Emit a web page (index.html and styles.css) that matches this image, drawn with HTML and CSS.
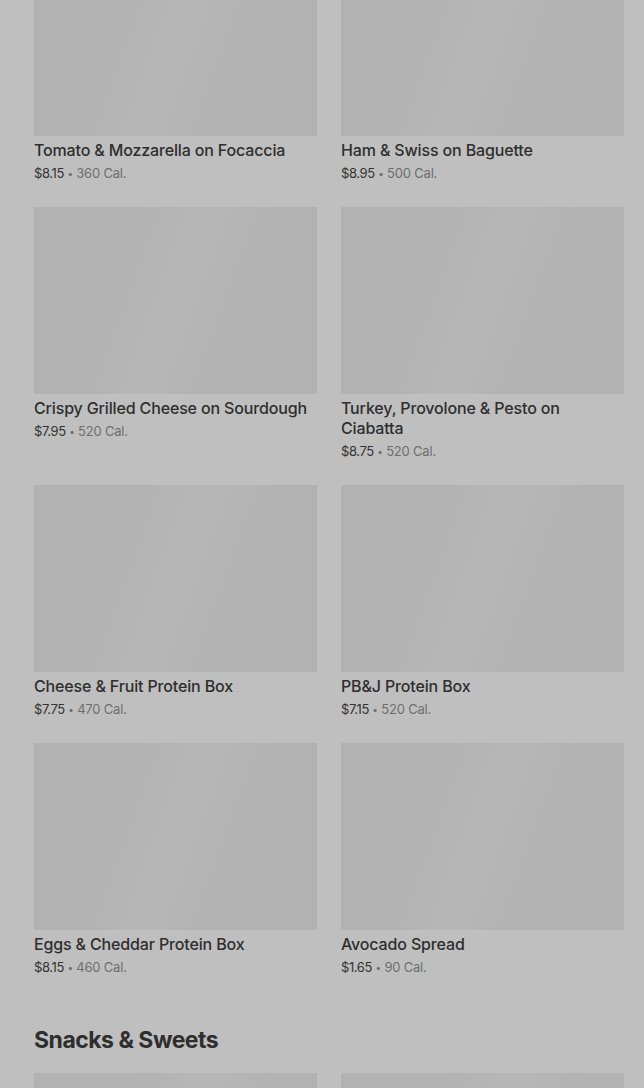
FILE: index.html
```html
<!DOCTYPE html>
<html lang="en">
<head>
<meta charset="utf-8">
<link rel="stylesheet" href="styles.css">
</head>
<body>
<main class="menu">
  <section class="grid first">
    <article class="item"><div class="thumb"></div><h3 class="name">Tomato &amp; Mozzarella on Focaccia</h3><p class="meta"><span class="price">$8.15</span> <span class="dot">•</span> 360 Cal.</p></article>
    <article class="item"><div class="thumb"></div><h3 class="name">Ham &amp; Swiss on Baguette</h3><p class="meta"><span class="price">$8.95</span> <span class="dot">•</span> 500 Cal.</p></article>
    <article class="item"><div class="thumb"></div><h3 class="name">Crispy Grilled Cheese on Sourdough</h3><p class="meta"><span class="price">$7.95</span> <span class="dot">•</span> 520 Cal.</p></article>
    <article class="item"><div class="thumb"></div><h3 class="name">Turkey, Provolone &amp; Pesto on Ciabatta</h3><p class="meta"><span class="price">$8.75</span> <span class="dot">•</span> 520 Cal.</p></article>
    <article class="item"><div class="thumb"></div><h3 class="name">Cheese &amp; Fruit Protein Box</h3><p class="meta"><span class="price">$7.75</span> <span class="dot">•</span> 470 Cal.</p></article>
    <article class="item"><div class="thumb"></div><h3 class="name">PB&amp;J Protein Box</h3><p class="meta"><span class="price">$7.15</span> <span class="dot">•</span> 520 Cal.</p></article>
    <article class="item"><div class="thumb"></div><h3 class="name">Eggs &amp; Cheddar Protein Box</h3><p class="meta"><span class="price">$8.15</span> <span class="dot">•</span> 460 Cal.</p></article>
    <article class="item"><div class="thumb"></div><h3 class="name">Avocado Spread</h3><p class="meta"><span class="price">$1.65</span> <span class="dot">•</span> 90 Cal.</p></article>
  </section>
  <h2 class="section-title">Snacks &amp; Sweets</h2>
  <section class="grid">
    <article class="item"><div class="thumb"></div></article>
    <article class="item"><div class="thumb"></div></article>
  </section>
</main>
</body>
</html>
```
FILE: styles.css
```css
html, body {
  margin: 0;
  padding: 0;
  background: #bfbfbf;
  overflow: hidden;
}
body {
  font-family: "Inter", "Roboto", sans-serif;
  color: #2e2e2e;
}
.menu {
  padding: 0 20px 0 34px;
}
.grid {
  display: grid;
  grid-template-columns: 283px 283px;
  column-gap: 24px;
  row-gap: 24px;
}
.grid.first {
  margin-top: -51px;
}
.item {
  display: flex;
  flex-direction: column;
}
.thumb {
  height: 187px;
  background: linear-gradient(110deg, #b2b2b2 0%, #b2b2b2 30%, #b7b7b7 50%, #b2b2b2 70%, #b2b2b2 100%);
}
.name {
  margin: 4px 0 0;
  font-size: 16px;
  line-height: 20px;
  font-weight: 500;
  color: #2e2e2e;
  letter-spacing: -0.15px;
}
.meta {
  margin: 3px 0 0;
  height: 20px;
  font-size: 13px;
  line-height: 20px;
  color: #6e6e6e;
  letter-spacing: -0.2px;
}
.price {
  color: #333;
  letter-spacing: -0.4px;
}
.dot {
  display: inline-block;
  font-size: 10px;
  line-height: 10px;
  vertical-align: 1px;
}
.section-title {
  margin: 48px 0 18px;
  font-size: 23px;
  line-height: 30px;
  font-weight: 700;
  color: #2e2e2e;
  letter-spacing: -0.5px;
}
```
